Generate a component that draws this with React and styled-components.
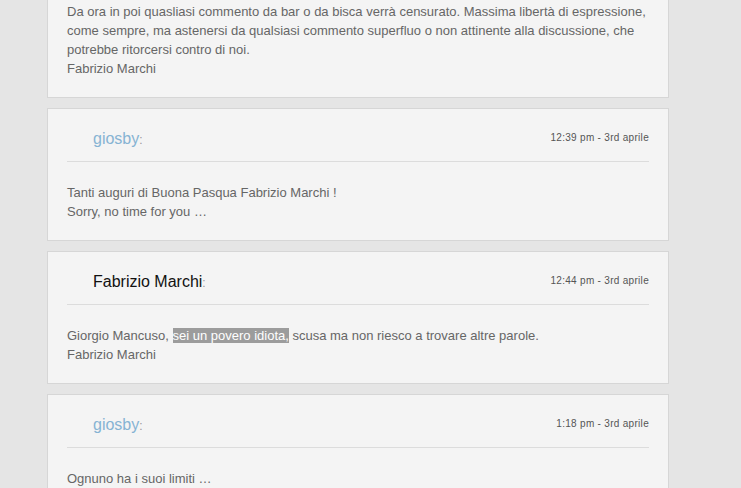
import React from 'react';
import styled, { createGlobalStyle } from 'styled-components';

const GlobalStyle = createGlobalStyle`
  html, body {
    margin: 0;
    padding: 0;
    background: #e5e5e5;
    font-family: "Liberation Sans", Arial, sans-serif;
  }
`;

const Page = styled.div`
  width: 741px;
  height: 488px;
  overflow: hidden;
  padding-left: 47px;
  box-sizing: border-box;
`;

const CommentList = styled.div`
  width: 622px;
  display: flex;
  flex-direction: column;
  gap: 10px;
`;

const Card = styled.div`
  background: #f4f4f4;
  border: 1px solid #d6d6d6;
  border-top: ${(p) => (p.$clipped ? 'none' : '1px solid #d6d6d6')};
  padding: ${(p) => (p.$clipped ? '2px 19px 19px' : '0 19px 19px')};
`;

const Header = styled.div`
  display: flex;
  justify-content: space-between;
  align-items: center;
  padding: 18px 0 9px 26px;
  border-bottom: 1px solid #dcdcdc;
  margin-bottom: 21px;
`;

const Author = styled.span`
  font-size: 16px;
  line-height: 24px;
  color: ${(p) => (p.$link ? '#86b3d3' : '#111')};
`;

const Colon = styled.span`
  font-size: 12px;
  color: #999;
`;

const Stamp = styled.span`
  font-size: 10px;
  letter-spacing: 0.3px;
  color: #555;
  margin-top: -4px;
`;

const Body = styled.p`
  margin: 0;
  font-size: 13px;
  line-height: 19px;
  color: #666;
`;

const Marked = styled.span`
  background: #9c9c9c;
  color: #fff;
`;

function Comment({ name, link, time, children }) {
  return (
    <Card>
      <Header>
        <Author $link={link}>
          {name}
          <Colon>:</Colon>
        </Author>
        <Stamp>{time}</Stamp>
      </Header>
      <Body>{children}</Body>
    </Card>
  );
}

export default function App() {
  return (
    <Page>
      <GlobalStyle />
      <CommentList>
        <Card $clipped>
          <Body>
            Da ora in poi quasliasi commento da bar o da bisca verrà censurato. Massima libertà di espressione,
            come sempre, ma astenersi da qualsiasi commento superfluo o non attinente alla discussione, che
            potrebbe ritorcersi contro di noi.
            <br />
            Fabrizio Marchi
          </Body>
        </Card>

        <Comment name="giosby" link time="12:39 pm - 3rd aprile">
          Tanti auguri di Buona Pasqua Fabrizio Marchi !
          <br />
          Sorry, no time for you …
        </Comment>

        <Comment name="Fabrizio Marchi" time="12:44 pm - 3rd aprile">
          Giorgio Mancuso, <Marked>sei un povero idiota,</Marked> scusa ma non riesco a trovare altre parole.
          <br />
          Fabrizio Marchi
        </Comment>

        <Comment name="giosby" link time="1:18 pm - 3rd aprile">
          Ognuno ha i suoi limiti …
        </Comment>
      </CommentList>
    </Page>
  );
}
